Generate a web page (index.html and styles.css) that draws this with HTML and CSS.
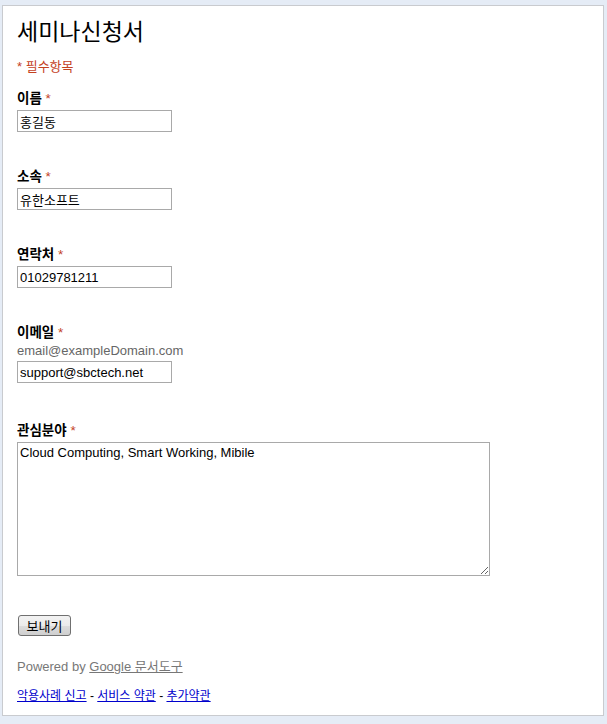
FILE: index.html
```html
<!DOCTYPE html>
<html lang="ko">
  <head>
    <meta charset="utf-8" />
    <title>세미나신청서</title>
    <link rel="stylesheet" href="styles.css">
  </head>

  <body>
    <div class="form-container">
      <h1 class="form-title">세미나신청서</h1>
      <div class="required-note">* 필수항목</div>

      <form class="form-body">
        <div class="item">
          <label class="item-label">이름 <span class="req">*</span></label>
          <input class="text-input" type="text" value="홍길동" />
        </div>

        <div class="item">
          <label class="item-label">소속 <span class="req">*</span></label>
          <input class="text-input" type="text" value="유한소프트" />
        </div>

        <div class="item">
          <label class="item-label">연락처 <span class="req">*</span></label>
          <input class="text-input" type="text" value="01029781211" />
        </div>

        <div class="item item-email">
          <label class="item-label">이메일 <span class="req">*</span></label>
          <div class="item-help">email@exampleDomain.com</div>
          <input class="text-input" type="text" value="support@sbctech.net" />
        </div>

        <div class="item">
          <label class="item-label">관심분야 <span class="req">*</span></label>
          <textarea class="text-area">Cloud Computing, Smart Working, Mibile</textarea>
        </div>

        <div class="submit-row">
          <button class="btn-submit" type="button">보내기</button>
        </div>
      </form>

      <div class="powered">Powered by <a href="#">Google 문서도구</a></div>

      <div class="footer-links">
        <a href="#">악용사례 신고</a> - <a href="#">서비스 약관</a> - <a href="#">추가약관</a>
      </div>
    </div>
  </body>
</html>
```

FILE: styles.css
```css
body {
  margin: 0;
  background-color: #e5ecf6;
  font-family: "Liberation Sans", "Noto Sans CJK KR", sans-serif;
  font-size: 13px;
  color: #000;
}

.form-container {
  margin: 5px 3px 7px 2px;
  border: 1px solid #c9cbcf;
  background-color: #fff;
  padding: 12px 14px 10px 14px;
  height: 687px;
}

.form-title {
  margin: 0;
  font-size: 23px;
  font-weight: normal;
  line-height: 28px;
}

.required-note {
  margin-top: 13px;
  color: #c4421f;
  line-height: 16px;
}

.form-body {
  margin-top: 16px;
}

/*=============================================*/

.item {
  margin-bottom: 37px;
}

.item-email {
  margin-bottom: 40px;
}

.item-label {
  display: block;
  font-weight: bold;
  font-size: 13.5px;
  line-height: 16px;
  margin-bottom: 3px;
}

.req {
  color: #c4421f;
  font-weight: normal;
}

.item-help {
  color: #666;
  line-height: 16px;
  margin-top: -1px;
  margin-bottom: 2px;
}

.text-input {
  display: block;
  box-sizing: border-box;
  width: 155px;
  height: 22px;
  margin: 0;
  padding: 1px 2px;
  border: 1px solid #a9a9a9;
  font-family: inherit;
  font-size: 13px;
  color: #000;
}

.text-area {
  display: block;
  box-sizing: border-box;
  width: 473px;
  height: 134px;
  margin: 0;
  padding: 2px;
  border: 1px solid #a9a9a9;
  font-family: inherit;
  font-size: 13px;
  color: #000;
  resize: both;
}

/*=============================================*/

.submit-row {
  padding-top: 2px;
}

.btn-submit {
  margin-left: 1px;
  width: 53px;
  height: 21px;
  padding: 0;
  border: 1px solid #707070;
  border-radius: 3px;
  background: linear-gradient(#f2f2f2, #ebebeb 50%, #dddddd 51%, #cfcfcf);
  font-family: inherit;
  font-size: 13px;
  color: #000;
}

.powered {
  margin-top: 23px;
  color: #777;
  line-height: 16px;
}

.powered a {
  color: #777;
}

.footer-links {
  margin-top: 13px;
  font-size: 12px;
  line-height: 16px;
}

.footer-links a {
  color: #00c;
}
```
